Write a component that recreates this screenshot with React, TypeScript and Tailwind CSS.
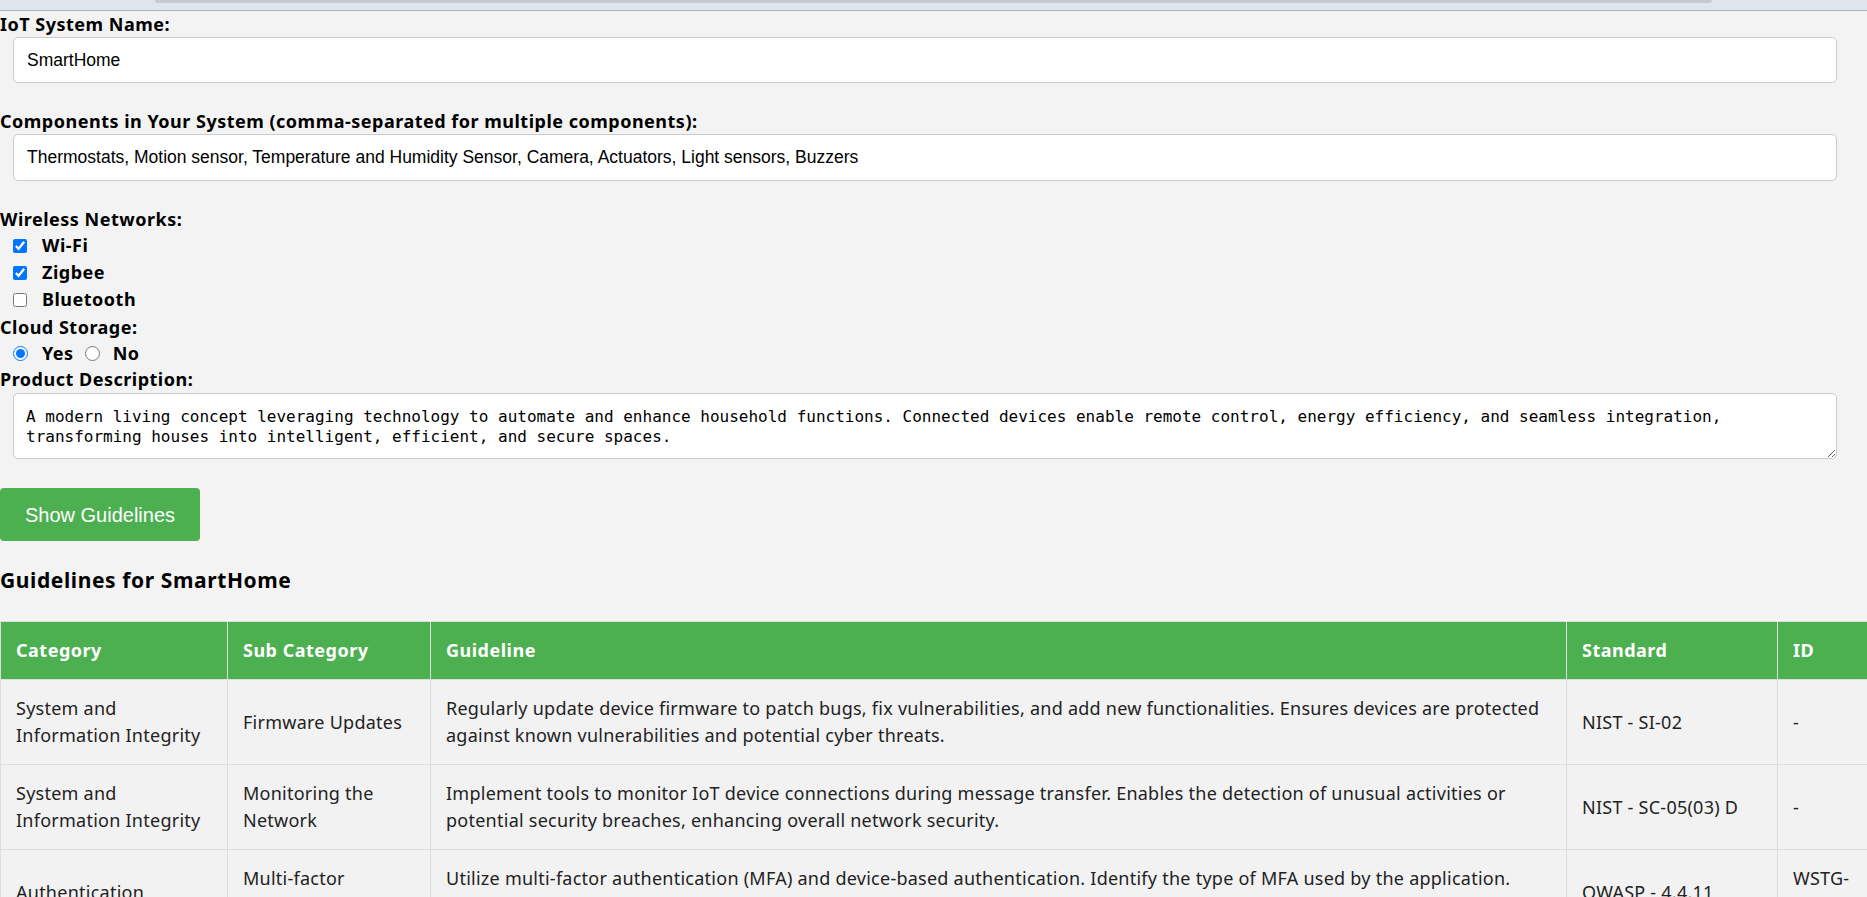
import React from "react";

const labelFont = { fontFamily: '"Noto Sans", "Open Sans", sans-serif' };

const rows = [
  {
    category: "System and Information Integrity",
    sub: "Firmware Updates",
    guideline:
      "Regularly update device firmware to patch bugs, fix vulnerabilities, and add new functionalities. Ensures devices are protected against known vulnerabilities and potential cyber threats.",
    standard: "NIST - SI-02",
    id: "-",
  },
  {
    category: "System and Information Integrity",
    sub: "Monitoring the Network",
    guideline:
      "Implement tools to monitor IoT device connections during message transfer. Enables the detection of unusual activities or potential security breaches, enhancing overall network security.",
    standard: "NIST - SC-05(03) D",
    id: "-",
  },
  {
    category: "Authentication",
    sub: "Multi-factor Authentication",
    guideline:
      "Utilize multi-factor authentication (MFA) and device-based authentication. Identify the type of MFA used by the application. Verify that the MFA implementation cannot be bypassed.",
    standard: "OWASP - 4.4.11",
    id: "WSTG-ATHN-11",
  },
];

export default function App() {
  return (
    <div
      className="w-[1867px] min-h-screen overflow-hidden bg-[#f3f3f3] text-black"
      style={labelFont}
    >
      {/* top strip */}
      <div className="h-[11px] border-b border-[#aab2bb] bg-[#dfe5ec]">
        <div className="ml-[155px] h-[3px] w-[1557px] rounded-b-[3px] bg-[#c3cad3]" />
      </div>

      <form className="flex flex-col">
        <label className="h-[26px] text-[18px] leading-[26px] font-bold tracking-[0.5px]">IoT System Name:</label>
        <input
          type="text"
          defaultValue="SmartHome"
          className="ml-[13px] h-[46px] w-[1824px] rounded-[5px] border border-[#cccccc] bg-white pl-[13px] text-[17.5px] text-black outline-none"
          style={{ fontFamily: '"Liberation Sans", Arial, sans-serif' }}
        />

        <label className="mt-[26px] h-[25px] text-[18px] leading-[25px] font-bold tracking-[0.5px]">
          Components in Your System (comma-separated for multiple components):
        </label>
        <input
          type="text"
          defaultValue="Thermostats, Motion sensor, Temperature and Humidity Sensor, Camera, Actuators, Light sensors, Buzzers"
          className="ml-[13px] h-[47px] w-[1824px] rounded-[5px] border border-[#cccccc] bg-white pl-[13px] text-[17.5px] text-black outline-none"
          style={{ fontFamily: '"Liberation Sans", Arial, sans-serif' }}
        />

        <div className="mt-[26px] h-[25px] text-[18px] leading-[25px] font-bold tracking-[0.5px]">Wireless Networks:</div>
        {[
          { name: "Wi-Fi", checked: true },
          { name: "Zigbee", checked: true },
          { name: "Bluetooth", checked: false },
        ].map((n) => (
          <label key={n.name} className="flex h-[27px] items-center text-[18px] font-bold tracking-[0.5px]">
            <input
              type="checkbox"
              defaultChecked={n.checked}
              className="m-0 ml-[13px] h-[14px] w-[14px]"
            />
            <span className="ml-[15px]">{n.name}</span>
          </label>
        ))}

        <div className="h-[28px] text-[18px] leading-[28px] font-bold tracking-[0.5px]">Cloud Storage:</div>
        <div className="flex h-[25px] items-center text-[18px] font-bold tracking-[0.5px]">
          <input type="radio" name="cloud" defaultChecked className="m-0 ml-[13px] h-[15px] w-[15px]" />
          <span className="ml-[14px]">Yes</span>
          <input type="radio" name="cloud" className="m-0 ml-[11px] h-[15px] w-[15px]" />
          <span className="ml-[13px]">No</span>
        </div>

        <label className="h-[27px] text-[18px] leading-[27px] font-bold tracking-[0.5px]">Product Description:</label>
        <textarea
          className="ml-[13px] h-[66px] w-[1824px] rounded-[5px] border border-[#cccccc] bg-white px-[12px] pt-[13px] text-[16px] leading-[20px] text-black outline-none"
          style={{ fontFamily: '"DejaVu Sans Mono", "Liberation Mono", monospace' }}
          defaultValue="A modern living concept leveraging technology to automate and enhance household functions. Connected devices enable remote control, energy efficiency, and seamless integration, transforming houses into intelligent, efficient, and secure spaces."
        />

        <button
          type="button"
          className="mt-[29px] h-[53px] w-[200px] rounded-[4px] bg-[#4caf50] text-[20px] text-white"
          style={{ fontFamily: '"Liberation Sans", Arial, sans-serif' }}
        >
          Show Guidelines
        </button>
      </form>

      <h3 className="mt-[24px] h-[30px] text-[21px] leading-[30px] font-bold tracking-[0.6px]">Guidelines for SmartHome</h3>

      <table className="mt-[26px] w-[1887px] table-fixed border-collapse text-[18px] leading-[27px] tracking-[0.25px]">
        <colgroup>
          <col className="w-[227px]" />
          <col className="w-[203px]" />
          <col className="w-[1136px]" />
          <col className="w-[211px]" />
          <col className="w-[110px]" />
        </colgroup>
        <thead>
          <tr className="bg-[#4caf50] text-white">
            {["Category", "Sub Category", "Guideline", "Standard", "ID"].map((h) => (
              <th key={h} className="border border-[#dddddd] p-[15px] text-left font-bold tracking-[0.5px]">
                {h}
              </th>
            ))}
          </tr>
        </thead>
        <tbody className="text-[#222222]">
          {rows.map((r, i) => (
            <tr key={i} className="bg-[#f2f2f2]">
              <td className="border border-[#dddddd] p-[15px] align-middle">{r.category}</td>
              <td className="border border-[#dddddd] p-[15px] align-middle">{r.sub}</td>
              <td className="border border-[#dddddd] p-[15px] align-middle">{r.guideline}</td>
              <td className="border border-[#dddddd] p-[15px] align-middle">{r.standard}</td>
              <td className="border border-[#dddddd] p-[15px] align-middle">{r.id}</td>
            </tr>
          ))}
        </tbody>
      </table>
    </div>
  );
}
